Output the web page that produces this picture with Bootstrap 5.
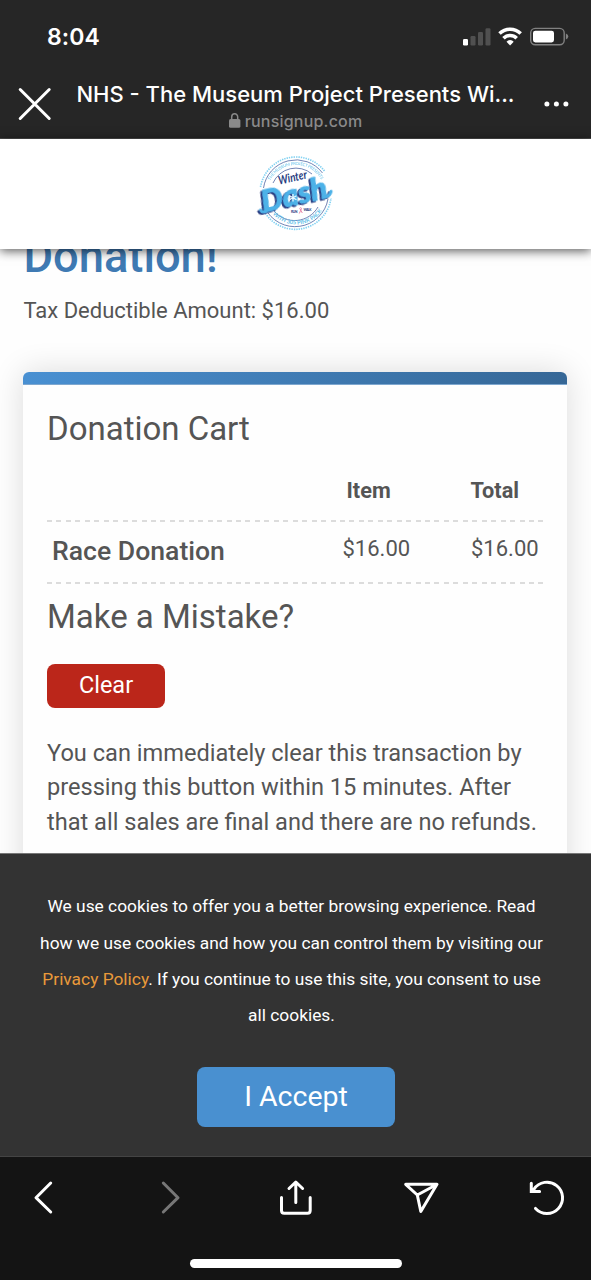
<!DOCTYPE html>
<html lang="en">
<head>
<meta charset="utf-8">
<meta name="viewport" content="width=device-width, initial-scale=1">
<title>Donation - RunSignup</title>
<link href="https://cdn.jsdelivr.net/npm/bootstrap@5.3.0/dist/css/bootstrap.min.css" rel="stylesheet">
<style>
body{font-family:Roboto,"Liberation Sans",sans-serif;color:#555;background:#fefefe}
.phone{width:591px;height:1280px}
.chrome-top{height:139px;background:#262626;font-family:Inter,"Liberation Sans",sans-serif;border-bottom:1px solid #4c4c4c}
.status{height:73px;padding:0 22px 0 47px}
.clock{font-size:23px;font-weight:600;letter-spacing:.1px;line-height:1;padding-top:2px}
.titlebar{height:65px;padding:0 22px 0 18px}
.page-title{font-size:22px;font-weight:500;line-height:28px;letter-spacing:0;width:440px}
.page-host{font-size:16px;font-weight:500;line-height:20px;color:#8a8a8a;letter-spacing:.2px;margin-top:3px}
.logo-bar{height:110px;background:#fff;box-shadow:0 2px 10px rgba(0,0,0,.65);z-index:2}
.logo-bar svg{margin:6px 1px 0 0}
.page-body{height:604px;padding:0 23.4px}
.thanks{font-size:45.3px;font-weight:500;color:#3f7ab3;line-height:46px;margin:-15px 0 0;height:48px}
.deduct{font-size:22px;line-height:34px;margin:12px 0 44px}
.cart{width:544px;height:600px;border:0;border-radius:6px;box-shadow:0 0 32px rgba(0,0,0,.14);overflow:hidden;background:#fefefe}
.cart-strip{height:13px;background:linear-gradient(100deg,#4990d2,#366796);border-bottom:1px solid #7ea7cf}
.cart-inner{padding:24px 23px 0 23.6px}
.head-txt{font-size:33px;font-weight:400;line-height:40px;margin:0}
.grid-row{display:grid;grid-template-columns:291px 130px 1fr}
.dashes{height:2px;background:repeating-linear-gradient(90deg,#dcdcdc 0 5px,transparent 5px 9.45px)}
.btn-clear{width:118px;height:44px;border-radius:8px;background:#bb261a;color:#fff;font-size:23.5px;line-height:1;padding:0}
.note{font-size:23.6px;line-height:34.7px;white-space:nowrap}
.cookie{height:304px;background:#333;color:#fff;border-top:1px solid #777;border-bottom:1px solid #444}
.cookie p{font-size:17.35px;line-height:36.2px;margin:34.4px 8px .6px 0;white-space:nowrap}
.cookie a{color:#ea9a3a;text-decoration:none}
.btn-accept{width:198px;height:60px;border-radius:8px;background:#4990d0;color:#fff;font-size:28.5px;line-height:1;padding:0;margin:33px 0 0 1px}
.tools{height:123px;background:#141414}
.tool-row{height:80px;padding:1px 24px 0 25px}
.home-bar{width:212px;height:9px;border-radius:5px;background:#fff;margin-top:22px}
.dash-word{filter:drop-shadow(-1.2px 1.2px 0 #293d81)}
</style>
</head>
<body>
<div class="phone d-flex flex-column overflow-hidden">
  <header class="chrome-top flex-shrink-0 text-white">
    <div class="status d-flex justify-content-between align-items-center">
      <span class="clock">8:04</span>
      <svg width="106" height="20" viewBox="0 0 106 20">
        <g fill="#505050"><rect x="7.5" y="9" width="5" height="9.5" rx="1.2"/><rect x="15" y="5" width="5" height="13.5" rx="1.2"/><rect x="22.5" y="1.2" width="5" height="17.3" rx="1.2"/></g>
        <rect y="12" width="5" height="6.5" rx="1.2" fill="#fff"/>
        <g fill="none" stroke="#fff" stroke-width="3.5"><path d="M36.500 6.600a15 15 0 0 1 21.200 0"/><path d="M40.500 11.200a9.200 9.200 0 0 1 13.200 0"/></g>
        <path d="M43.500 14.700a4.800 4.800 0 0 1 7.200 0l-3.600 3.800z" fill="#fff"/>
        <rect x="67.700" y="1.400" width="33.500" height="16.400" rx="4.500" fill="none" stroke="#818181" stroke-width="1.400"/>
        <rect x="70" y="3.700" width="21" height="11.800" rx="2.400" fill="#fff"/>
        <path d="M102.900 6.500q2.400.9 2.400 3t-2.400 3z" fill="#818181"/>
      </svg>
    </div>
    <div class="titlebar d-flex justify-content-between">
      <svg width="34" height="62" viewBox="0 0 34 62"><path d="M2.200 16.500l29 29m0-29l-29 29" stroke="#fff" stroke-width="3" stroke-linecap="round"/></svg>
      <div class="text-center pe-1" style="padding-top:7px">
        <div class="page-title text-nowrap">NHS - The Museum Project Presents Wi...</div>
        <div class="page-host d-flex justify-content-center align-items-center gap-1">
          <svg width="12" height="16" viewBox="0 0 12 16"><rect y="6.100" width="11.400" height="8.600" rx="1.500" fill="#8a8a8a"/><path d="M2.700 7V4a3 3.200 0 0 1 6 0V7" fill="none" stroke="#8a8a8a" stroke-width="1.500"/></svg>
          <span>runsignup.com</span>
        </div>
      </div>
      <svg width="26" height="62" viewBox="0 0 26 62" fill="#fff"><circle cx="3.900" cy="31" r="2.500"/><circle cx="13.400" cy="31" r="2.500"/><circle cx="22.900" cy="31" r="2.500"/></svg>
    </div>
  </header>

  <div class="logo-bar d-flex justify-content-center flex-shrink-0 position-relative">
    <svg width="100" height="100" viewBox="0 0 100 100">
      <defs>
        <path id="arcTop" d="M22 49a29 29 0 0 1 58 0"/>
        <path id="arcLow" d="M19.500 48a31.500 31.500 0 0 0 63 0"/>
      </defs>
      <path d="M15.500 42a36 36 0 0 1 64-16M17 62a36 36 0 0 0 69-9" fill="none" stroke="#83d2f2" stroke-width="1.700" stroke-dasharray="1.400 1"/>
      <g fill="none" stroke="#354f93" stroke-width=".7">
        <path d="M18.500 43a33 33 0 0 1 59-15"/><path d="M20 63a33.500 33.500 0 0 0 63-9"/>
        <path d="M28 38a25 25 0 0 1 39-9"/><path d="M29 66a27 27 0 0 0 44-4"/>
      </g>
      <g font-family="Lato,sans-serif" font-weight="700" fill="#62bfe9">
        <text font-size="4.200" opacity=".75"><textPath href="#arcTop" startOffset="14" textLength="62">THE MUSEUM PROJECT PRESENTS</textPath></text>
        <text font-size="5.600"><textPath href="#arcLow" startOffset="23" textLength="57">WITH 305 PINK PACK</textPath></text>
      </g>
      <g transform="rotate(-13 50 50)" font-family="Lato,sans-serif" font-style="italic" font-weight="900">
        <g class="dash-word" fill="#4db2e8" stroke="#4db2e8" stroke-width=".9" stroke-linejoin="round">
          <text x="15.500" y="59.500" font-size="30" textLength="67" lengthAdjust="spacingAndGlyphs">Dash</text>
          <path d="M13 57q1 4 7 1.500M81 58.500q3 0 5-4" fill="none" stroke-width="3" stroke-linecap="round"/>
        </g>
        <text x="37" y="36.500" font-size="12" font-weight="700" textLength="29" lengthAdjust="spacingAndGlyphs" fill="#293d81">Winter</text>
      </g>
      <path d="M48 49v7.600M44.500 50.800l7 4M44.500 54.800l7 -4" stroke="#e9f8ff" stroke-width="1.300"/>
      <g font-family="Lato,sans-serif" font-weight="900" font-size="3.200" fill="#293d81"><text x="46" y="68.300" textLength="6.500">RUN</text><text x="58.500" y="65.800" textLength="8">WALK</text></g>
      <path d="M54.300 68.500l2.200 -5q-.8 -2 -1.700 0l2.500 4.500" fill="none" stroke="#e989a8" stroke-width="1"/>
    </svg>
  </div>

  <main class="page-body overflow-hidden flex-shrink-0">
    <h1 class="thanks">Donation!</h1>
    <p class="deduct">Tax Deductible Amount: $16.00</p>
    <section class="card cart">
      <div class="cart-strip"></div>
      <div class="cart-inner">
        <h2 class="head-txt">Donation Cart</h2>
        <div class="grid-row fw-bold" style="padding-top:25px;height:71px;font-size:21.7px;line-height:34px"><span></span><span style="padding-left:8.500px">Item</span><span style="padding-left:2.500px">Total</span></div>
        <div class="dashes"></div>
        <div class="grid-row" style="height:60px;font-size:22px;line-height:34px;padding-top:10px">
          <span style="font-size:26.600px;font-weight:500;padding:2px 0 0 5px;white-space:nowrap">Race Donation</span><span style="padding-left:4.500px">$16.00</span><span style="padding-left:3px">$16.00</span>
        </div>
        <div class="dashes"></div>
        <h2 class="head-txt" style="margin-top:13px">Make a Mistake?</h2>
        <button class="btn btn-clear" style="margin-top:27px" type="button">Clear</button>
        <p class="note" style="margin-top:27.500px">You can immediately clear this transaction by<br>pressing this button within 15 minutes. After<br>that all sales are final and there are no refunds.</p>
      </div>
    </section>
  </main>

  <div class="cookie text-center flex-shrink-0">
    <p>We use cookies to offer you a better browsing experience. Read<br>how we use cookies and how you can control them by visiting our<br><a href="#">Privacy Policy</a>. If you continue to use this site, you consent to use<br>all cookies.</p>
    <button class="btn btn-accept" type="button">I Accept</button>
  </div>

  <footer class="tools flex-shrink-0 d-flex flex-column align-items-center">
    <div class="tool-row d-flex w-100 justify-content-between align-items-center">
      <svg width="36" height="40" viewBox="25 1178 36 40" fill="none" stroke="#fff" stroke-width="3" stroke-linecap="round" stroke-linejoin="round"><path d="M50.700 1183l-14.700 14.700 14.700 14.300"/></svg>
      <svg width="36" height="40" viewBox="151 1178 36 40" fill="none" stroke="#777" stroke-width="3" stroke-linecap="round" stroke-linejoin="round"><path d="M163.300 1183l14.700 14.700-14.700 14.300"/></svg>
      <svg width="36" height="40" viewBox="277 1178 36 40" fill="none" stroke="#fff" stroke-width="3" stroke-linecap="round" stroke-linejoin="round"><path d="M281.500 1197.500v13q0 2.700 2.700 2.700h23.300q2.700 0 2.700-2.700v-13M295.800 1202.500v-20M289 1188.500l6.800-6.500 6.800 6.500"/></svg>
      <svg width="36" height="40" viewBox="403 1178 36 40" fill="none" stroke="#fff" stroke-width="3" stroke-linecap="round" stroke-linejoin="round"><path d="M405.700 1184.300h31.300l-16.200 27.200-3.500-16.500zM417.300 1195l18.500-10"/></svg>
      <svg width="38" height="40" viewBox="529 1178 38 40" fill="none" stroke="#fff" stroke-width="3" stroke-linecap="round"><path d="M535.500 1208.400a15.600 15.600 0 1 0-1.500-19.300l-2.600 2.400M531.300 1183.200v8.300h8.300"/></svg>
    </div>
    <div class="home-bar"></div>
  </footer>
</div>
<script src="https://cdn.jsdelivr.net/npm/bootstrap@5.3.0/dist/js/bootstrap.bundle.min.js"></script>
</body>
</html>
